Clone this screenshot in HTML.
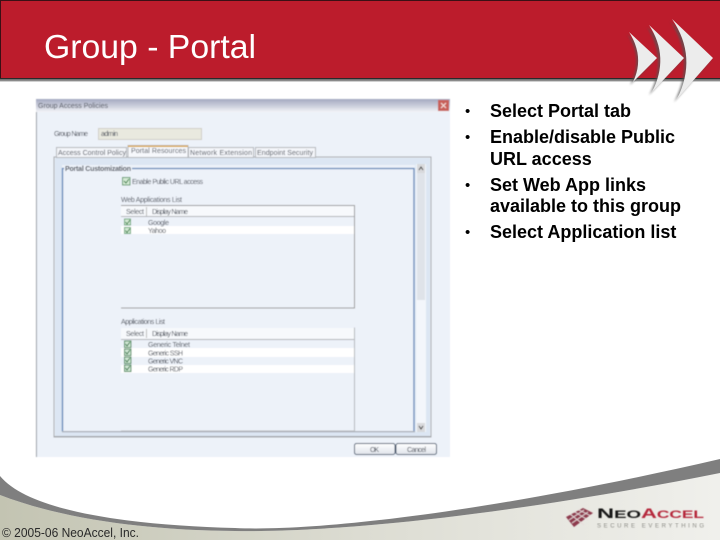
<!DOCTYPE html>
<html><head><meta charset="utf-8"><style>
html,body{margin:0;padding:0;width:720px;height:540px;overflow:hidden;background:#fff}
svg{display:block;font-family:"Liberation Sans",sans-serif}
.s{font-size:7px;fill:#4a4f5a}
.b{font-size:18px;font-weight:bold;fill:#000}
</style></head><body>
<svg width="720" height="540" viewBox="0 0 720 540" xmlns="http://www.w3.org/2000/svg">
<defs>
<linearGradient id="t" x1="0" y1="0" x2="0" y2="1"><stop offset="0" stop-color="#a4a9c0"/><stop offset=".6" stop-color="#d0d3df"/><stop offset="1" stop-color="#f2f3f7"/></linearGradient>
<linearGradient id="f" x1="0" y1="0" x2="1" y2="0"><stop offset="0" stop-color="#c3c4b2"/><stop offset=".5" stop-color="#dcdcd2"/><stop offset="1" stop-color="#f0f0ec"/></linearGradient>
<linearGradient id="btn" x1="0" y1="0" x2="0" y2="1"><stop offset="0" stop-color="#fff"/><stop offset="1" stop-color="#dfe3ea"/></linearGradient>
<filter id="bl" x="-5%" y="-5%" width="110%" height="110%"><feGaussianBlur stdDeviation=".4"/></filter>
<filter id="sh" x="-30%" y="-30%" width="160%" height="160%"><feGaussianBlur stdDeviation="1"/></filter>
</defs>

<!-- header -->
<rect x="0" y="0" width="720" height="79" fill="#bc1c2c"/>
<rect x="0" y="0" width="720" height="1" fill="#3a1015"/>
<rect x="0" y="0" width="1" height="79" fill="#3a1015"/>
<rect x="0" y="78" width="720" height="1.4" fill="#2a2a2a"/>
<rect x="0" y="79.4" width="720" height="2" fill="#8a8a8a"/>
<text x="44" y="58" font-size="33.7" fill="#fff" textLength="212" lengthAdjust="spacingAndGlyphs">Group - Portal</text>

<!-- arrows -->
<g fill="#555" opacity=".7" filter="url(#sh)">
<path d="M627 34Q644 58 630 85L655 60Z"/>
<path d="M647 27Q668 60 649 95L682 60Z"/>
<path d="M670 21Q696 60 674 102L711 60Z"/>
</g>
<g fill="#ececec">
<path d="M629 32Q645 57 633 82L657 58Z"/>
<path d="M649 25Q670 57 652 92L684 58Z"/>
<path d="M672 19Q698 57 677 99L713 58Z"/>
</g>

<!-- footer swoosh -->
<path d="M0 495C60 518 140 530 235 531C340 533 520 513 720 473V540H0Z" fill="url(#f)"/>
<path d="M0 476C30 512 130 525 235 528C320 532 500 510 720 459V473C520 513 340 533 235 531C140 530 60 518 0 495Z" fill="#7f7f7f"/>
<text x="2" y="537" font-size="12.5" fill="#2a2a2a" textLength="137" lengthAdjust="spacingAndGlyphs">© 2005-06 NeoAccel, Inc.</text>

<!-- logo -->
<g filter="url(#bl)">
<path d="M566 517L583 508L593 513L574 527Z" fill="#8e3a4e"/>
<g stroke="#e8dcdc" stroke-width=".8">
<path d="M570 514L584 525M574 511.500L588 520M578 509.500L591 516"/>
<path d="M569 520L584 510M572 523L588 512"/>
</g>
</g>
<text x="597" y="518" font-size="14" font-weight="bold" fill="#151515" textLength="44" lengthAdjust="spacingAndGlyphs" filter="url(#bl)">N<tspan font-size="11">EO</tspan></text>
<text x="641" y="518" font-size="14" font-weight="bold" fill="#b5273a" textLength="63" lengthAdjust="spacingAndGlyphs" filter="url(#bl)">A<tspan font-size="11">CCEL</tspan></text>
<text x="597" y="527.500" font-size="6" fill="#8a8a84" textLength="107" filter="url(#bl)">SECURE EVERYTHING</text>

<!-- dialog screenshot -->
<g filter="url(#bl)">
<rect x="36" y="99" width="414" height="358" fill="#edf2f9"/>
<rect x="36" y="99" width="1" height="358" fill="#9a9ea6"/>
<rect x="36" y="99" width="414" height="13" fill="url(#t)"/>
<rect x="438" y="100" width="11" height="11" fill="#c8605a"/>
<path d="M441 103L446 108M446 103L441 108" stroke="#f5dcd8" stroke-width="1.200"/>
<text x="38" y="108" class="s" textLength="70">Group Access Policies</text>

<text x="54" y="136" class="s" textLength="34" fill="#333">Group Name</text>
<rect x="98.500" y="128.500" width="103" height="11" fill="#e9e9df" stroke="#cfcfc6"/>
<text x="101" y="136" class="s" textLength="17">admin</text>

<!-- panel -->
<rect x="54" y="157" width="377" height="280" fill="#edf2f9" stroke="#a4a7ab"/>
<rect x="55" y="158" width="375" height="7" fill="#dce6f3"/>
<rect x="55" y="432" width="375" height="5" fill="#dce6f3"/>
<rect x="55" y="158" width="7" height="278" fill="#dce6f3"/>
<rect x="415" y="158" width="15" height="278" fill="#dce6f3"/>
<rect x="54" y="436" width="377" height="1.500" fill="#a4a7ab"/>

<!-- tabs -->
<rect x="56.500" y="147.500" width="70" height="10" fill="#f4f6fa" stroke="#b3b6ba"/>
<text x="58" y="155" class="s" fill="#333" textLength="68">Access Control Policy</text>
<rect x="128" y="145.500" width="60" height="12" fill="#f6f8fc" stroke="#b3b6ba"/>
<rect x="128" y="145.500" width="60" height="1.500" fill="#d9a94c"/>
<text x="131" y="153" class="s" fill="#333" textLength="55">Portal Resources</text>
<rect x="188.500" y="147.500" width="65" height="10" fill="#f4f6fa" stroke="#b3b6ba"/>
<text x="190" y="155" class="s" textLength="62">Network Extension</text>
<rect x="255.500" y="147.500" width="60" height="10" fill="#f4f6fa" stroke="#b3b6ba"/>
<text x="257" y="155" class="s" textLength="56">Endpoint Security</text>

<!-- fieldset: top, left and right blue, bottom grey -->
<rect x="62.500" y="168.500" width="351.500" height="263" fill="#edf2f9"/>
<path d="M62.500 431.500V168.500H414V431.500" fill="none" stroke="#5b82b5" stroke-width="1.300"/>
<rect x="62" y="431" width="353" height="1.300" fill="#a9afb8"/>
<rect x="64" y="165" width="68" height="7" fill="#edf2f9"/>
<text x="65" y="171" class="s" fill="#3f6ca5" font-weight="bold" textLength="66">Portal Customization</text>

<!-- scrollbar -->
<rect x="416" y="164" width="10" height="268" fill="#f3f6fb"/>
<rect x="417" y="173" width="8" height="127" fill="#dfe3e9"/>
<rect x="417" y="164" width="8" height="9" fill="#d8d9dc"/>
<path d="M419 170L421 167L423 170" fill="none" stroke="#333" stroke-width="1"/>
<rect x="417" y="423" width="8" height="9" fill="#d8d9dc"/>
<path d="M419 426L421 429L423 426" fill="none" stroke="#333" stroke-width="1"/>

<!-- enable -->
<rect x="122.500" y="177.500" width="7.500" height="7.500" fill="#d4ead4" stroke="#5d9a6c"/>
<path d="M124 181L126 183L129 179" fill="none" stroke="#2f7a3f" stroke-width="1"/>
<text x="132" y="184" class="s" fill="#777" textLength="71">Enable Public URL access</text>

<!-- table 1 -->
<text x="121" y="202" class="s" textLength="61">Web Applications List</text>
<path d="M121 205.500H354.500V308H121" fill="none" stroke="#999"/>
<rect x="121" y="206" width="233" height="10" fill="#f7f9fc"/>
<rect x="121" y="216" width="233" height="1" fill="#b0b3b8"/>
<rect x="121" y="226" width="233" height="8" fill="#fff"/>
<rect x="146" y="207" width="1" height="9" fill="#bbb"/>
<text x="126" y="214" class="s" fill="#555" textLength="18">Select</text>
<text x="152" y="214" class="s" fill="#555" textLength="36">Display Name</text>
<rect x="124.500" y="219" width="6" height="6" fill="#d4ead4" stroke="#6aa87a"/>
<path d="M125.500 222L127 224L130 220" fill="none" stroke="#2f7a3f" stroke-width=".9"/>
<rect x="124.500" y="227.500" width="6" height="6" fill="#d4ead4" stroke="#6aa87a"/>
<path d="M125.500 230.500L127 232.500L130 228.500" fill="none" stroke="#2f7a3f" stroke-width=".9"/>
<text x="148" y="225" class="s" textLength="21">Google</text>
<text x="148" y="233" class="s" textLength="18">Yahoo</text>

<!-- table 2 -->
<text x="121" y="324" class="s" textLength="44">Applications List</text>
<path d="M354.500 327.500V431H121" fill="none" stroke="#b4b7bb"/>
<rect x="121" y="328" width="233" height="11" fill="#f7f9fc"/>
<rect x="121" y="339" width="233" height="1" fill="#b0b3b8"/>
<rect x="121" y="348" width="233" height="9" fill="#fff"/>
<rect x="121" y="365" width="233" height="8" fill="#fff"/>
<rect x="146" y="329" width="1" height="9" fill="#bbb"/>
<text x="126" y="336" class="s" fill="#555" textLength="18">Select</text>
<text x="152" y="336" class="s" fill="#555" textLength="36">Display Name</text>
<g fill="#cfe6d3" stroke="#3f8a58">
<rect x="124.500" y="341" width="6.500" height="6.500"/>
<rect x="124.500" y="349" width="6.500" height="6.500"/>
<rect x="124.500" y="357" width="6.500" height="6.500"/>
<rect x="124.500" y="365" width="6.500" height="6.500"/>
</g>
<g fill="none" stroke="#1f6a35" stroke-width=".9">
<path d="M125.500 344L127 346L130 342"/>
<path d="M125.500 352L127 354L130 350"/>
<path d="M125.500 360L127 362L130 358"/>
<path d="M125.500 368L127 370L130 366"/>
</g>
<text x="148" y="347" class="s" textLength="42">Generic Telnet</text>
<text x="148" y="355.500" class="s" textLength="35">Generic SSH</text>
<text x="148" y="363.500" class="s" textLength="35">Generic VNC</text>
<text x="148" y="371.500" class="s" textLength="35">Generic RDP</text>

<!-- buttons -->
<rect x="354.500" y="443.500" width="40.500" height="11" rx="2" fill="url(#btn)" stroke="#4a5a70"/>
<text x="370" y="452" class="s" textLength="9">OK</text>
<rect x="396" y="443.500" width="40.500" height="11" rx="2" fill="url(#btn)" stroke="#4a5a70"/>
<text x="407" y="452" class="s" textLength="19">Cancel</text>
</g>

<!-- bullets -->
<g fill="#000">
<text x="465" y="116" font-size="15">•</text>
<text x="465" y="142" font-size="15">•</text>
<text x="465" y="190" font-size="15">•</text>
<text x="465" y="237" font-size="15">•</text>
</g>
<text class="b" x="490" y="117">Select Portal tab</text>
<text class="b" x="490" y="143">Enable/disable Public</text>
<text class="b" x="490" y="165">URL access</text>
<text class="b" x="490" y="191">Set Web App links</text>
<text class="b" x="490" y="212">available to this group</text>
<text class="b" x="490" y="238">Select Application list</text>
</svg>
</body></html>
